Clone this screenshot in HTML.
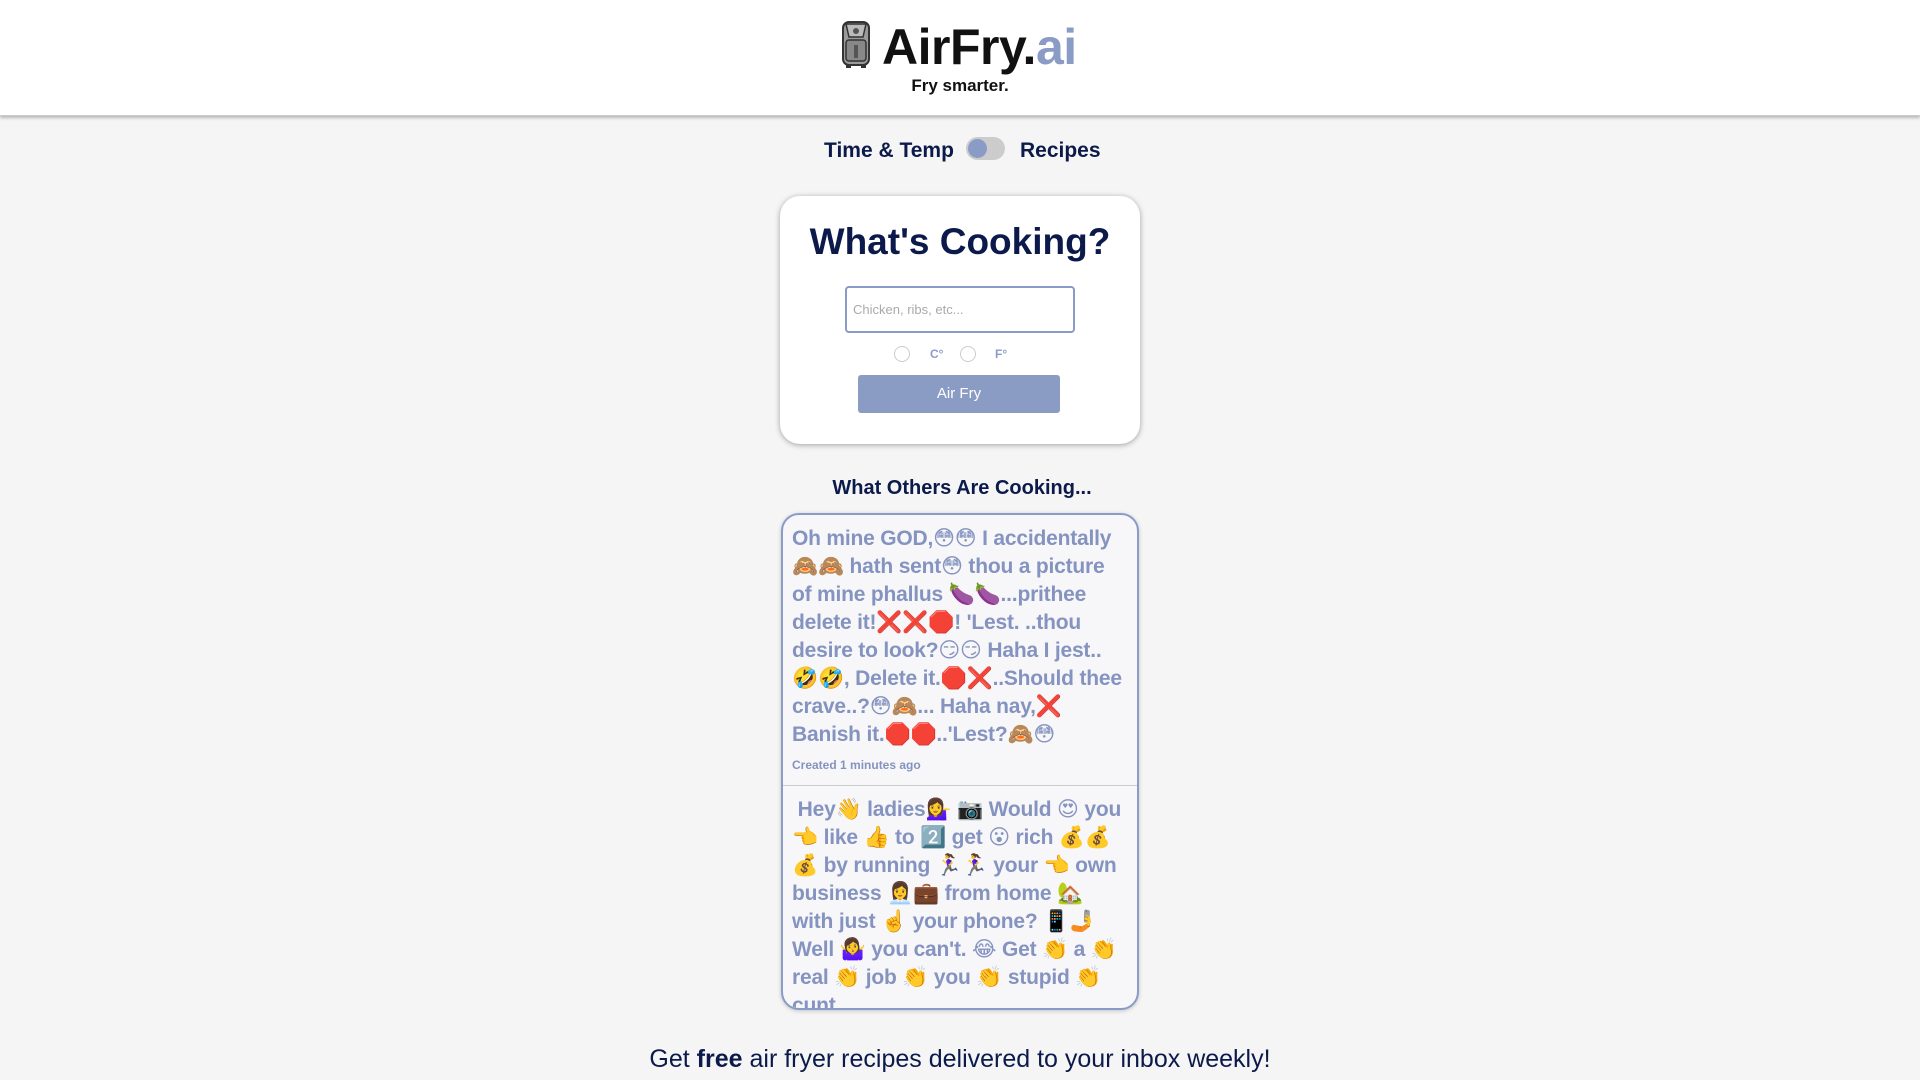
<!DOCTYPE html>
<html><head><meta charset="utf-8"><style>
*{box-sizing:border-box;margin:0;padding:0}
body{width:1920px;height:1080px;overflow:hidden;background:#f5f5f6;font-family:"Liberation Sans","DejaVu Sans",sans-serif;color:#0b1a4a;position:relative}
.hdr{position:absolute;left:0;top:0;width:1920px;height:116px;background:#fff;box-shadow:0 2px 3px rgba(0,0,0,.25);border-bottom:1px solid #ccc}
.logo{position:absolute;left:882px;top:18px;font-size:50px;font-weight:bold;color:#111;letter-spacing:-0.5px}
.logo span{color:#8a9cc6}
.tag{position:absolute;left:0;width:1920px;text-align:center;top:76px;font-size:17px;font-weight:bold;color:#111}
.tog{position:absolute;top:139px;font-size:21px;font-weight:bold;color:#0b1a4a}
.sw{position:absolute;left:966px;top:137px;width:39px;height:23px;border-radius:12px;background:#ccc}
.sw i{position:absolute;left:2px;top:2px;width:19px;height:19px;border-radius:50%;background:#8a9cc6}
.card{position:absolute;left:780px;top:196px;width:360px;height:248px;background:#fff;border-radius:20px;box-shadow:0 1px 6px rgba(0,0,0,.35)}
.card h1{position:absolute;left:0;width:360px;text-align:center;top:25px;font-size:37px;font-weight:bold;color:#0b1a4a}
.inp{position:absolute;left:65px;top:90px;width:230px;height:47px;border:2px solid #8a9cc6;border-radius:4px;font-size:13px;color:#aaa;padding:14px 6px}
.rad{position:absolute;top:150px;width:16px;height:16px;border-radius:50%;border:1px solid #ccc;background:#fff}
.rl{position:absolute;top:151px;font-size:12px;font-weight:bold;color:#8a9cc6}
.btn{position:absolute;left:78px;top:179px;width:202px;height:38px;background:#8a9cc4;border-radius:3px;color:#fff;font-size:15px;text-align:center;line-height:38px}
.oth{position:absolute;left:0;width:1924px;text-align:center;top:477px;font-size:20px;font-weight:bold;color:#0b1a4a}
.feed{position:absolute;left:781px;top:513px;width:358px;height:497px;border:2px solid #8a9cc6;border-radius:18px;background:#f7f7f9;overflow:hidden;box-shadow:0 1px 4px rgba(0,0,0,.2)}
.post{padding:10px 9px 0 9px;font-size:21px;font-weight:bold;color:#8493bf;line-height:28px;white-space:nowrap;letter-spacing:-0.2px}
.cr{font-size:12px;line-height:16px;margin:8px 0 12px;letter-spacing:0}
.div{border-top:1px solid #ccc}
.foot{position:absolute;left:0;width:1920px;text-align:center;top:1045px;font-size:25px;color:#0b1a4a}
</style></head><body>
<div class="hdr">
<svg style="position:absolute;left:841px;top:21px" width="30" height="48" viewBox="0 0 30 48">
<rect x="2" y="1" width="26" height="43" rx="6" fill="#9a9a9a" stroke="#333" stroke-width="2"/>
<path d="M5 3 L25 3 L22 16 L8 16 Z" fill="#bbb" stroke="#333" stroke-width="1.5"/>
<circle cx="15" cy="10" r="3" fill="#555"/>
<rect x="5" y="19" width="20" height="21" rx="3" fill="#888" stroke="#333" stroke-width="1.5"/>
<rect x="13" y="24" width="4" height="13" fill="#555"/>
<rect x="5" y="44" width="5" height="3" fill="#333"/><rect x="20" y="44" width="5" height="3" fill="#333"/>
</svg>
<div class="logo">AirFry.<span>ai</span></div>
<div class="tag">Fry smarter.</div>
</div>
<div class="tog" style="left:824px">Time &amp; Temp</div>
<div class="sw"><i></i></div>
<div class="tog" style="left:1020px">Recipes</div>
<div class="card">
<h1>What's Cooking?</h1>
<div class="inp">Chicken, ribs, etc...</div>
<div class="rad" style="left:114px"></div><div class="rl" style="left:150px">C°</div>
<div class="rad" style="left:180px"></div><div class="rl" style="left:215px">F°</div>
<div class="btn">Air Fry</div>
</div>
<div class="oth">What Others Are Cooking...</div>
<div class="feed">
<div class="post">Oh mine GOD,😳😳 I accidentally<br>🙈🙈 hath sent😳 thou a picture<br>of mine phallus 🍆🍆...prithee<br>delete it!❌❌🛑! 'Lest. ..thou<br>desire to look?😏😏 Haha I jest..<br>🤣🤣, Delete it.🛑❌..Should thee<br>crave..?😳🙈... Haha nay,❌<br>Banish it.🛑🛑..'Lest?🙈😳
<div class="cr">Created 1 minutes ago</div></div>
<div class="div"></div>
<div class="post" style="padding-top:10px">&nbsp;Hey👋 ladies💁‍♀️ 📷 Would 😍 you<br>👈 like 👍 to 2️⃣ get 😮 rich 💰💰<br>💰 by running 🏃‍♀️🏃‍♀️ your 👈 own<br>business 👩‍💼💼 from home 🏡<br>with just ☝️ your phone? 📱🤳<br>Well 🤷‍♀️ you can't. 😂 Get 👏 a 👏<br>real 👏 job 👏 you 👏 stupid 👏<br>cunt</div>
</div>
<div class="foot">Get <b>free</b> air fryer recipes delivered to your inbox weekly!</div>
</body></html>
